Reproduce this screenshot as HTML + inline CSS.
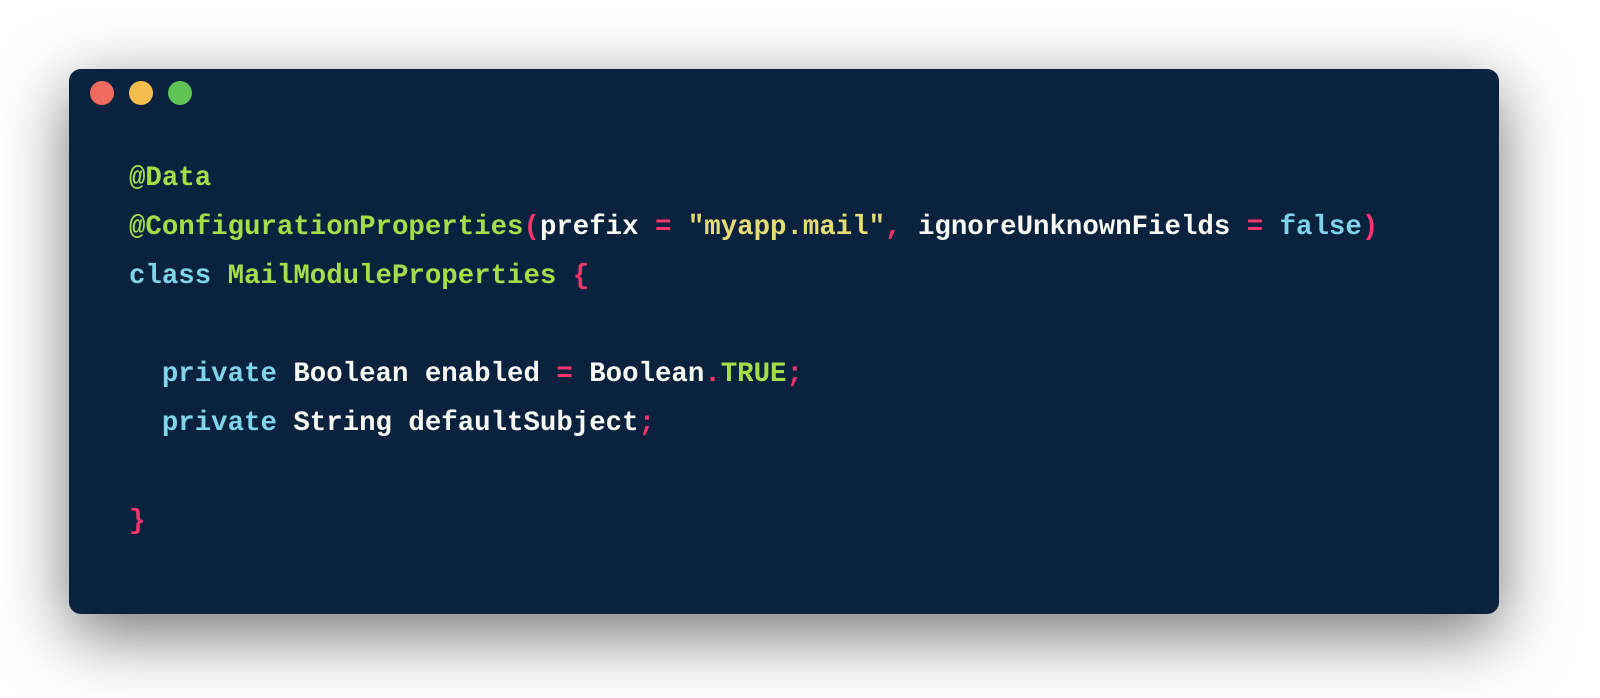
<!DOCTYPE html>
<html><head><meta charset="utf-8"><style>
html,body{margin:0;padding:0;background:#fff;width:1600px;height:698px;overflow:hidden}
.win{position:absolute;left:69px;top:69px;width:1430px;height:545px;background:#0a223d;border-radius:12px;box-shadow:0 20px 68px rgba(0,0,0,0.55)}
.dot{position:absolute;top:12px;width:24px;height:24px;border-radius:50%}
pre{position:absolute;left:60px;top:85px;margin:0;font-family:"Liberation Mono",monospace;font-weight:bold;font-size:27.4px;line-height:49px;color:#f8f8f2}
.g{color:#a6dc4a}.c{color:#7fd4ea}.p{color:#f5346f}.s{color:#e6db74}
</style></head><body>
<div class="win">
<div class="dot" style="left:21px;background:#ef6b5e"></div>
<div class="dot" style="left:60px;background:#f5be4f"></div>
<div class="dot" style="left:99px;background:#5fc454"></div>
<pre><span class="g">@Data</span>
<span class="g">@ConfigurationProperties</span><span class="p">(</span>prefix <span class="p">=</span> <span class="s">"myapp.mail"</span><span class="p">,</span> ignoreUnknownFields <span class="p">=</span> <span class="c">false</span><span class="p">)</span>
<span class="c">class</span> <span class="g">MailModuleProperties</span> <span class="p">{</span>

  <span class="c">private</span> Boolean enabled <span class="p">=</span> Boolean<span class="p">.</span><span class="g">TRUE</span><span class="p">;</span>
  <span class="c">private</span> String defaultSubject<span class="p">;</span>

<span class="p">}</span></pre>
</div>
</body></html>
